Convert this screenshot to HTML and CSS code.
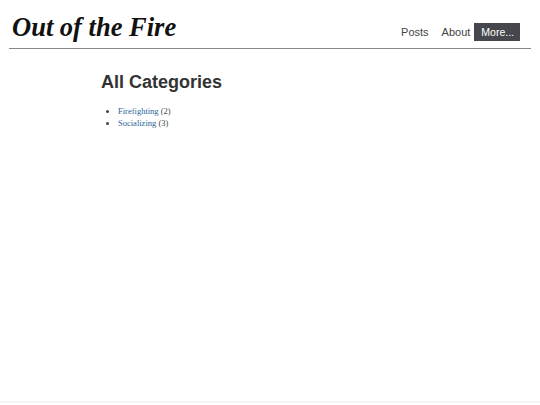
FILE: index.html
```html
<!DOCTYPE html>
<html>
<head>
<meta charset="utf-8">
<link rel="stylesheet" href="styles.css">
</head>
<body>
<header class="site-header">
  <a class="site-title" href="#">Out of the Fire</a>
  <nav class="site-nav">
    <a class="nav-link" href="#">Posts</a>
    <a class="nav-link" href="#">About</a>
    <a class="nav-link nav-more" href="#">More...</a>
  </nav>
</header>
<main class="content">
  <h1 class="page-title">All Categories</h1>
  <ul class="cat-list">
    <li><a href="#">Firefighting</a> (2)</li>
    <li><a href="#">Socializing</a> (3)</li>
  </ul>
</main>
<footer class="site-footer"></footer>
</body>
</html>
```
FILE: styles.css
```css
html, body {
  margin: 0;
  padding: 0;
  background: #fff;
}
body {
  font-family: "Liberation Serif", serif;
  color: #333;
  min-height: 403px;
  display: flex;
  flex-direction: column;
}
.site-header {
  margin: 0 9px;
  display: flex;
  align-items: flex-end;
  justify-content: space-between;
  border-bottom: 1px solid #888;
  padding: 10px 11px 7px 3px;
  height: 31px;
}
.site-title {
  font-family: "Liberation Serif", serif;
  font-weight: bold;
  font-style: italic;
  font-size: 26.5px;
  color: #111;
  text-decoration: none;
  line-height: 30px;
  margin-bottom: -1px;
}
.site-nav {
  display: flex;
  align-items: center;
}
.nav-link {
  font-family: "Liberation Sans", sans-serif;
  font-size: 11px;
  color: #444;
  text-decoration: none;
  padding: 3px 6px;
  line-height: 12px;
}
.nav-link + .nav-link {
  margin-left: 1px;
}
.nav-link + .nav-more {
  background: #46474c;
  color: #fff;
  font-size: 10.5px;
  padding: 3px 6px 3px 7px;
  margin-left: -2px;
}
.content {
  flex: 1;
  padding: 23px 0 0 101px;
}
.page-title {
  font-family: "Liberation Sans", sans-serif;
  font-size: 18px;
  font-weight: bold;
  color: #333;
  margin: 0 0 12px;
}
.cat-list {
  margin: 0;
  padding-left: 17px;
  font-size: 8.5px;
  line-height: 12px;
  color: #444;
}
.cat-list a {
  color: #2a6496;
  text-decoration: none;
}
.site-footer {
  height: 2px;
  background: #f5f5f5;
}
```
